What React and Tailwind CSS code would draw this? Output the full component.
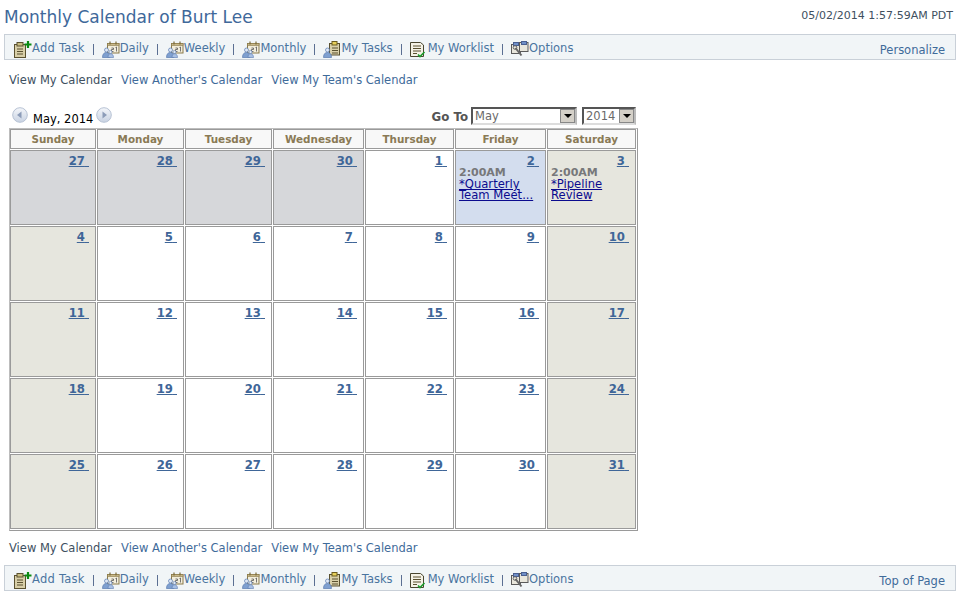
const F = { fontFamily: '"DejaVu Sans", Verdana, sans-serif' };

function CalIcon() {
  return (
    <svg width="18" height="17" viewBox="0 0 18 17" className="shrink-0">
      <rect x="5.500" y="2.500" width="11.500" height="9.500" fill="#f3eedc" stroke="#8a7a4a" />
      <rect x="5.500" y="2.500" width="11.500" height="2" fill="#c9b98a" stroke="#8a7a4a" strokeWidth="0.6" />
      <path d="M8 0.500v3M14 0.500v3" stroke="#7a6a3a" strokeWidth="1.200" />
      <path d="M9.500 7h2v1.500h-2v2h2M13.500 6.500l1-.5v4.500" stroke="#555" strokeWidth="0.8" fill="none" />
      <circle cx="4.500" cy="9" r="2" fill="#dfe8f5" stroke="#5a7bb0" strokeWidth="0.7" />
      <path d="M0.500 16.500c0-3.500 1.500-5 4-5s3.500 1.500 3.500 5z" fill="#7fa0d0" stroke="#5a7bb0" strokeWidth="0.7" />
      <circle cx="8.500" cy="11" r="1.600" fill="#dfe8f5" stroke="#5a7bb0" strokeWidth="0.6" />
      <path d="M6 16.500c0-2.600 1-3.700 2.600-3.700s2.900 1.100 2.900 3.700z" fill="#a8c0e4" stroke="#5a7bb0" strokeWidth="0.6" />
    </svg>
  );
}
function AddIcon() {
  return (
    <svg width="18" height="17" viewBox="0 0 18 17" className="shrink-0">
      <rect x="0.500" y="3.500" width="11" height="13" fill="#d8cfa8" stroke="#5a5130" />
      <rect x="3" y="1.500" width="6" height="3.500" fill="#c9bd80" stroke="#5a5130" />
      <path d="M3 8h6M3 10.500h6M3 13h6" stroke="#5a5130" />
      <path d="M14 0v7M10.500 3.500h7" stroke="#0a8a12" strokeWidth="2.200" />
    </svg>
  );
}
function TasksIcon() {
  return (
    <svg width="18" height="17" viewBox="0 0 18 17" className="shrink-0">
      <rect x="6.500" y="2.500" width="10" height="11.500" fill="#d9d0aa" stroke="#5a5130" />
      <rect x="9" y="0.500" width="5" height="3.500" fill="#e6cf5a" stroke="#6a5a20" />
      <path d="M9 7h6M9 9.500h6M9 12h6" stroke="#5a5130" />
      <circle cx="4.500" cy="9" r="2" fill="#dfe8f5" stroke="#5a7bb0" strokeWidth="0.7" />
      <path d="M0.500 16.500c0-3.500 1.500-5 4-5s4 1.500 4 5z" fill="#7fa0d0" stroke="#5a7bb0" strokeWidth="0.7" />
    </svg>
  );
}
function WorklistIcon() {
  return (
    <svg width="16" height="17" viewBox="0 0 16 17" className="shrink-0">
      <path d="M0.500 1.500h10l3 2.500v11.500h-13z" fill="#f5f2e6" stroke="#4a4630" />
      <path d="M3 5h8M3 7.500h8M3 10h8M3 12.500h4" stroke="#5a5130" />
      <path d="M8 13.500l2 2 4.500-4.500" stroke="#1c9a2c" strokeWidth="1.600" fill="none" />
    </svg>
  );
}
function OptionsIcon() {
  return (
    <svg width="18" height="17" viewBox="0 0 18 17" className="shrink-0">
      <rect x="0.500" y="3.500" width="9" height="9" fill="#e8e6dc" stroke="#5a5a5a" />
      <rect x="8.500" y="1.500" width="8.500" height="9" fill="#e8e6dc" stroke="#5a5a5a" />
      <rect x="2.500" y="1.500" width="5" height="3" fill="#6f8fc8" stroke="#4a5f90" />
      <rect x="10.500" y="0.500" width="5" height="3" fill="#6f8fc8" stroke="#4a5f90" />
      <path d="M4.500 7l6 7.500" stroke="#666" strokeWidth="2" />
      <circle cx="4" cy="6.500" r="1.800" fill="none" stroke="#666" />
    </svg>
  );
}

const tools = [
  ["Add Task", AddIcon, "", "tracking-[0.25px]"],
  ["Daily", CalIcon],
  ["Weekly", CalIcon],
  ["Monthly", CalIcon],
  ["My Tasks", TasksIcon],
  ["My Worklist", WorklistIcon, "gap-[2px]"],
  ["Options", OptionsIcon],
];

function Toolbar({ right }) {
  return (
    <div className="h-[26px] mx-[4px] w-[952px] bg-[#f1f5f7] border border-[#c9d0d8] flex items-center pl-[9px] pr-[10px] pt-[4px] text-[11.5px] text-[#3f6b9a]">
      {tools.map(([label, Icon, gap, track], i) => (
        <div key={label} className="flex items-center">
          {i > 0 && <span className="w-[1px] h-[11px] bg-[#5b6f92] mx-[8px] mt-[1px]" />}
          <span className={`flex items-center ${gap || ""}`}>
            <Icon />
            <span className={`text-[#4a749f] whitespace-nowrap ${track || ""}`}>{label}</span>
          </span>
        </div>
      ))}
      <span className="ml-auto mt-[3px] text-[#3f6b9a]">{right}</span>
    </div>
  );
}

function Links() {
  return (
    <div className="pl-[9px] flex gap-[9px] text-[11.5px] whitespace-nowrap h-[14px] items-center">
      <span className="text-[#40505f]">View My Calendar</span>
      <span className="text-[#3f6b9a]">View Another's Calendar</span>
      <span className="text-[#3f6b9a]">View My Team's Calendar</span>
    </div>
  );
}

function Arrow({ dir }) {
  return (
    <svg width="16" height="16" viewBox="0 0 16 16">
      <defs>
        <linearGradient id={`g${dir}`} x1="0" y1="0" x2="0" y2="1">
          <stop offset="0" stopColor="#f4f6fa" />
          <stop offset="1" stopColor="#c8d2e2" />
        </linearGradient>
      </defs>
      <circle cx="8" cy="8" r="7.300" fill={`url(#g${dir})`} stroke="#b7c2d4" />
      {dir === "l" ? <path d="M5 8l4.500-3.500v7z" fill="#8c9cb8" /> : <path d="M11 8l-4.500-3.500v7z" fill="#8c9cb8" />}
    </svg>
  );
}

function Select({ value, w }) {
  return (
    <div className={`h-[18px] ${w} bg-white border-2 border-t-[#555] border-l-[#555] border-r-[#bbb] border-b-[#ddd] flex items-center justify-between text-[11.5px] text-[#6a6a6a] pl-[2px]`}>
      <span className="mt-[1px]">{value}</span>
      <span className="w-[15px] h-[14px] flex items-center justify-center border border-[#888] bg-[#d4d0c8]">
        <span className="w-0 h-0 border-l-[4px] border-r-[4px] border-t-[4px] border-l-transparent border-r-transparent border-t-black" />
      </span>
    </div>
  );
}

const days = ["Sunday", "Monday", "Tuesday", "Wednesday", "Thursday", "Friday", "Saturday"];
const weeks = [
  [27, 28, 29, 30, 1, 2, 3],
  [4, 5, 6, 7, 8, 9, 10],
  [11, 12, 13, 14, 15, 16, 17],
  [18, 19, 20, 21, 22, 23, 24],
  [25, 26, 27, 28, 29, 30, 31],
];
const events = {
  "0-5": ["*Quarterly", "Team Meet..."],
  "0-6": ["*Pipeline", "Review"],
};

function Cell({ n, w, d }) {
  let bg = "bg-white";
  if (w === 0 && d < 4) bg = "bg-[#d6d7da]";
  else if (w === 0 && d === 5) bg = "bg-[#d3ddee]";
  else if (d === 0 || d === 6) bg = "bg-[#e6e6de]";
  const ev = events[`${w}-${d}`];
  return (
    <div className={`h-[75px] ${bg} border border-[#9a9a9a] pl-[3px] text-[11.6px] leading-[11px]`}>
      <div className="flex justify-end pr-[6px] pt-[4px] h-[16px]">
        <span className="font-bold text-[11.7px] leading-[12px] text-[#3f6698] underline whitespace-pre">{n} </span>
      </div>
      {ev && (
        <div>
          <div className="font-bold text-[#77787a] text-[11px] leading-[12px]">2:00AM</div>
          {ev.map((t) => (
            <div key={t} className="text-[#0b0b8e] underline">{t}</div>
          ))}
        </div>
      )}
    </div>
  );
}

export default function App() {
  return (
    <div style={F} className="w-[961px] h-[601px] bg-white overflow-hidden">
      <div className="flex justify-between items-start h-[34px] pl-[4px] pr-[8px] pt-[5px]">
        <div className="text-[17px] leading-[24px] text-[#40689a]">Monthly Calendar of Burt Lee</div>
        <div className="text-[11px] leading-[12px] text-[#40505f] mt-[5px]">05/02/2014 1:57:59AM PDT</div>
      </div>
      <Toolbar right="Personalize" />
      <div className="h-[14px]" />
      <Links />
      <div className="h-[19px]" />
      <div className="w-[628px] ml-[10px] h-[21px] flex items-start justify-between">
        <div className="flex items-start pl-[2px] text-[11.5px] text-black">
          <Arrow dir="l" />
          <span className="ml-[5px] mt-[5px] leading-[14px]">May, 2014</span>
          <span className="ml-[3px]"><Arrow dir="r" /></span>
        </div>
        <div className="flex items-start mr-[2px]">
          <span className="font-bold text-[11.8px] text-[#555] mt-[3px] mr-[3px] leading-[14px]">Go To</span>
          <Select value="May" w="w-[106px]" />
          <span className="w-[5px]" />
          <Select value="2014" w="w-[54px]" />
        </div>
      </div>
      <div className="ml-[9px] w-[629px] border border-[#9a9a9a] border-t-[#bdbdbd] border-l-[#bdbdbd] grid grid-cols-[87px_88px_88px_92px_90px_92px_90px]">
        {days.map((d) => (
          <div key={d} className="h-[20px] mb-[1px] mr-[1px] pt-[2px] bg-[#f8f8f8] border border-[#9a9a9a] flex items-center justify-center font-bold text-[10.4px] text-[#8a7a55]">{d}</div>
        ))}
        {weeks.map((wk, w) => wk.map((n, d) => (
          <div key={`${w}-${d}`} className="mr-[1px] mb-[1px]"><Cell n={n} w={w} d={d} /></div>
        )))}
      </div>
      <div className="h-[11px]" />
      <Links />
      <div className="h-[9px]" />
      <Toolbar right="Top of Page" />
    </div>
  );
}
